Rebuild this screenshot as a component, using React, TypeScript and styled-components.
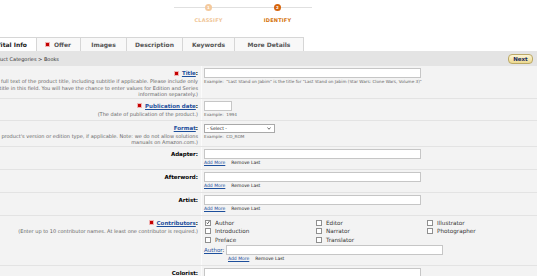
import styled, { createGlobalStyle } from 'styled-components';

const GlobalStyle = createGlobalStyle`
  body {
    margin: 0;
    background: #fff;
    overflow: hidden;
    font-family: 'DejaVu Sans', Verdana, sans-serif;
    color: #000;
  }
`;

const Page = styled.div`
  margin-left: -60px;
  width: 597px;
`;

const Stepper = styled.div`
  display: flex;
  margin-left: 234px;
  width: 138px;
  height: 37px;
  padding-top: 4px;
  box-sizing: border-box;
  background: linear-gradient(#e0e0e0, #e0e0e0) no-repeat 0 7px / 100% 1px;
`;

const Step = styled.div`
  width: 69px;
  display: flex;
  flex-direction: column;
  align-items: center;
`;

const Dot = styled.div<{ $color: string }>`
  width: 7px;
  height: 7px;
  border-radius: 50%;
  background: ${(p) => p.$color};
  color: #fff;
  font-size: 4px;
  font-weight: bold;
  line-height: 7px;
  text-align: center;
`;

const StepLabel = styled.div<{ $color: string }>`
  margin-top: 6px;
  font-size: 5px;
  font-weight: bold;
  letter-spacing: 0.2px;
  color: ${(p) => p.$color};
`;

const TabBar = styled.div`
  display: flex;
  padding-left: 46px;
  height: 14px;
`;

const Tab = styled.div<{ $w: number; $active?: boolean }>`
  width: ${(p) => p.$w}px;
  box-sizing: border-box;
  display: flex;
  align-items: center;
  justify-content: center;
  gap: 4px;
  font-size: 6px;
  font-weight: bold;
  color: ${(p) => (p.$active ? '#222' : '#555')};
  background: ${(p) => (p.$active ? '#fff' : '#f8f8f8')};
  border: 1px solid #d6d6d6;
  border-bottom: none;
  & + & {
    border-left: none;
  }
`;

const Crumbs = styled.div`
  height: 15px;
  display: flex;
  align-items: center;
  justify-content: space-between;
  padding: 0 4px 0 49px;
  background: #e4e4e4;
  font-size: 5px;
  color: #333;
`;

const NextButton = styled.button`
  width: 25px;
  height: 10px;
  padding: 0;
  border: 1px solid #bba866;
  border-radius: 4px;
  background: linear-gradient(#fcf5d6, #ecd98e);
  font-family: inherit;
  font-size: 5.5px;
  font-weight: bold;
  color: #1b2a5c;
`;

const Row = styled.div`
  display: grid;
  grid-template-columns: 261px 1fr;
  background: #f3f3f3;
  & + & {
    border-top: 1px solid #e3e3e3;
  }
`;

const LabelCell = styled.div`
  padding: 2px 3px 0 0;
  text-align: right;
`;

const ValueCell = styled.div`
  padding: 2px 0 2px 2px;
  border-left: 1px solid #fbfbfb;
`;

const LabelLine = styled.div`
  height: 10px;
  display: flex;
  justify-content: flex-end;
  align-items: center;
  gap: 3px;
  font-size: 5.5px;
  font-weight: bold;
`;

const Required = styled.span`
  width: 3px;
  height: 3px;
  background: #c40000;
  box-shadow: 0 0 0 1px #f0b4b4;
  margin-right: 1px;
`;

const FieldLink = styled.a<{ $bold?: boolean }>`
  color: #1d4f9c;
  text-decoration: underline;
  font-weight: ${(p) => (p.$bold === false ? 'normal' : 'bold')};
`;

const Desc = styled.div`
  font-size: 5px;
  line-height: 6.5px;
  color: #666;
  white-space: nowrap;
`;

const TextInput = styled.input<{ $w: number }>`
  display: block;
  width: ${(p) => p.$w}px;
  height: 10px;
  box-sizing: border-box;
  margin: 0;
  padding: 0;
  border: 1px solid #c6c6c6;
  background: #fff;
`;

const SelectBox = styled.div`
  width: 71px;
  height: 9px;
  margin-top: 1px;
  box-sizing: border-box;
  display: flex;
  align-items: center;
  justify-content: space-between;
  padding: 0 3px 0 2px;
  border: 1px solid #a9a9a9;
  background: #fff;
  font-size: 4.5px;
  color: #222;
`;

const Example = styled.div`
  font-size: 4.2px;
  line-height: 7px;
  color: #666;
  white-space: nowrap;
`;

const Actions = styled.div<{ $indent?: number }>`
  display: flex;
  gap: 6px;
  margin-left: ${(p) => p.$indent ?? 0}px;
  font-size: 4.5px;
  line-height: 8px;
`;

const AddMore = styled.a`
  color: #1d4f9c;
  text-decoration: underline;
`;

const RemoveLast = styled.span`
  color: #222;
`;

const CheckGrid = styled.div`
  display: grid;
  grid-template-columns: repeat(3, 111px);
  grid-auto-rows: 8.5px;
  margin-top: 1px;
`;

const CheckItem = styled.label`
  display: flex;
  align-items: center;
  gap: 4px;
  padding-left: 1px;
  font-size: 5.7px;
  color: #333;
`;

const Box = styled.span`
  width: 6px;
  height: 6px;
  box-sizing: border-box;
  border: 1px solid #8f8f8f;
  background: #fff;
  display: flex;
  align-items: center;
  justify-content: center;
`;

const AuthorLine = styled.div`
  display: flex;
  align-items: center;
  gap: 2px;
  margin-top: 1px;
  font-size: 5.5px;
`;

const Check = ({ label, checked }: { label: string; checked?: boolean }) => (
  <CheckItem>
    <Box>
      {checked && (
        <svg width="5" height="5" viewBox="0 0 10 10">
          <path d="M1.5 5.5 L4 8 L8.5 1.5" fill="none" stroke="#222" strokeWidth="1.8" />
        </svg>
      )}
    </Box>
    {label}
  </CheckItem>
);

const SimpleField = ({ label }: { label: string }) => (
  <Row>
    <LabelCell>
      <LabelLine>{label}:</LabelLine>
    </LabelCell>
    <ValueCell>
      <TextInput $w={217} readOnly />
      <Actions>
        <AddMore>Add More</AddMore>
        <RemoveLast>Remove Last</RemoveLast>
      </Actions>
    </ValueCell>
  </Row>
);

export default function App() {
  return (
    <>
      <GlobalStyle />
      <Page>
        <Stepper>
          <Step>
            <Dot $color="#f4c99c">1</Dot>
            <StepLabel $color="#f0c596">CLASSIFY</StepLabel>
          </Step>
          <Step>
            <Dot $color="#d6640c">2</Dot>
            <StepLabel $color="#d5730c">IDENTIFY</StepLabel>
          </Step>
        </Stepper>

        <TabBar>
          <Tab $w={51} $active>Vital Info</Tab>
          <Tab $w={44}>
            <Required />
            Offer
          </Tab>
          <Tab $w={46}>Images</Tab>
          <Tab $w={56}>Description</Tab>
          <Tab $w={52}>Keywords</Tab>
          <Tab $w={69}>More Details</Tab>
        </TabBar>

        <Crumbs>
          <span>Product Categories &gt; Books</span>
          <NextButton>Next</NextButton>
        </Crumbs>

        <Row>
          <LabelCell>
            <LabelLine>
              <Required />
              <span>
                <FieldLink>Title</FieldLink>:
              </span>
            </LabelLine>
            <Desc>
              (The full text of the product title, including subtitle if applicable. Please include only
              <br />
              the title in this field. You will have the chance to enter values for Edition and Series
              <br />
              information separately.)
            </Desc>
          </LabelCell>
          <ValueCell>
            <TextInput $w={217} readOnly />
            <Example>
              Example:&nbsp; "Last Stand on Jabim" is the title for "Last Stand on Jabim (Star Wars: Clone
              Wars, Volume 3)"
            </Example>
          </ValueCell>
        </Row>

        <Row>
          <LabelCell>
            <LabelLine>
              <Required />
              <span>
                <FieldLink>Publication date</FieldLink>:
              </span>
            </LabelLine>
            <Desc>(The date of publication of the product.)</Desc>
          </LabelCell>
          <ValueCell>
            <TextInput $w={28} readOnly />
            <Example>Example:&nbsp; 1994</Example>
          </ValueCell>
        </Row>

        <Row>
          <LabelCell>
            <LabelLine>
              <span>
                <FieldLink>Format</FieldLink>:
              </span>
            </LabelLine>
            <Desc>
              (The product's version or edition type, if applicable. Note: we do not allow solutions
              <br />
              manuals on Amazon.com.)
            </Desc>
          </LabelCell>
          <ValueCell>
            <SelectBox>
              <span>- Select -</span>
              <svg width="4" height="3" viewBox="0 0 8 6">
                <path d="M1 1 L4 4.5 L7 1" fill="none" stroke="#333" strokeWidth="1.4" />
              </svg>
            </SelectBox>
            <Example>Example:&nbsp; CD_ROM</Example>
          </ValueCell>
        </Row>

        <SimpleField label="Adapter" />
        <SimpleField label="Afterword" />
        <SimpleField label="Artist" />

        <Row>
          <LabelCell>
            <LabelLine>
              <Required />
              <span>
                <FieldLink>Contributors</FieldLink>:
              </span>
            </LabelLine>
            <Desc>(Enter up to 10 contributor names. At least one contributor is required.)</Desc>
          </LabelCell>
          <ValueCell>
            <CheckGrid>
              <Check label="Author" checked />
              <Check label="Editor" />
              <Check label="Illustrator" />
              <Check label="Introduction" />
              <Check label="Narrator" />
              <Check label="Photographer" />
              <Check label="Preface" />
              <Check label="Translator" />
            </CheckGrid>
            <AuthorLine>
              <span>
                <FieldLink $bold={false}>Author</FieldLink>:
              </span>
              <TextInput $w={217} readOnly />
            </AuthorLine>
            <Actions $indent={24}>
              <AddMore>Add More</AddMore>
              <RemoveLast>Remove Last</RemoveLast>
            </Actions>
          </ValueCell>
        </Row>

        <SimpleField label="Colorist" />
      </Page>
    </>
  );
}
